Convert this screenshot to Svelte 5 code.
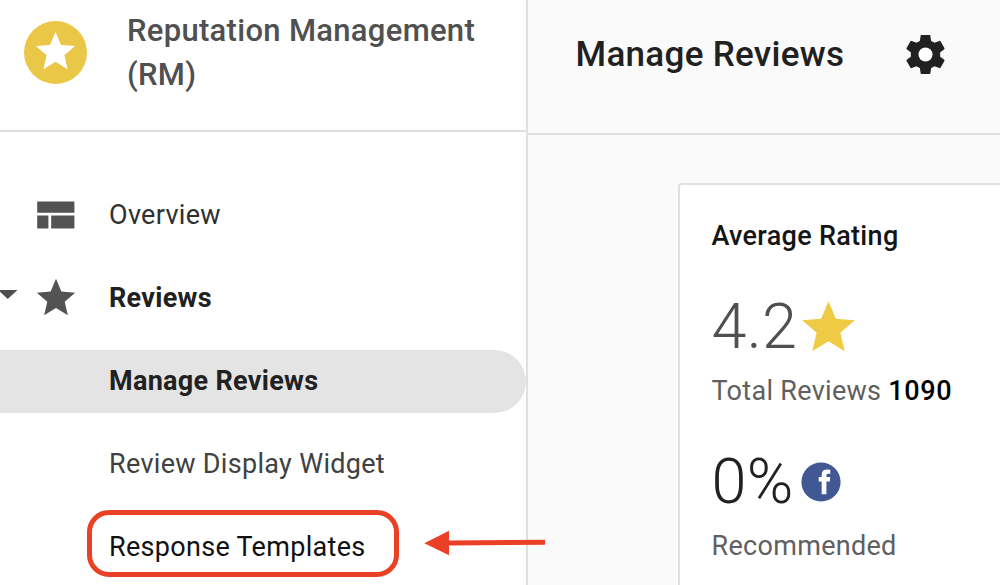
<script>
  const starPath =
    'M12 17.27L18.18 21l-1.64-7.03L22 9.24l-7.19-.61L12 2 9.19 8.63 2 9.24l5.46 4.73L5.82 21z';
  const gearPath =
    'M19.43 12.98c.04-.32.07-.64.07-.98s-.03-.66-.07-.98l2.11-1.65c.19-.15.24-.42.12-.64l-2-3.46c-.12-.22-.39-.3-.61-.22l-2.49 1c-.52-.4-1.08-.73-1.69-.98l-.38-2.65C14.46 2.18 14.25 2 14 2h-4c-.25 0-.46.18-.49.42l-.38 2.65c-.61.25-1.17.59-1.69.98l-2.49-1c-.23-.09-.49 0-.61.22l-2 3.46c-.13.22-.07.49.12.64l2.11 1.65c-.04.32-.07.65-.07.98s.03.66.07.98l-2.11 1.65c-.19.15-.24.42-.12.64l2 3.46c.12.22.39.3.61.22l2.49-1c.52.4 1.08.73 1.69.98l.38 2.65c.03.24.24.42.49.42h4c.25 0 .46-.18.49-.42l.38-2.65c.61-.25 1.17-.59 1.69-.98l2.49 1c.23.09.49 0 .61-.22l2-3.46c.12-.22.07-.49-.12-.64l-2.11-1.65z';

  const items = [
    { label: 'Overview', kind: 'overview', icon: 'dashboard' },
    { label: 'Reviews', kind: 'reviews', icon: 'star' },
    { label: 'Manage Reviews', kind: 'active' },
    { label: 'Review Display Widget', kind: 'widget' },
    { label: 'Response Templates', kind: 'templates' }
  ];
</script>

<div class="app">
  <aside class="sidebar">
    <header class="brand">
      <div class="badge">
        <svg viewBox="0 0 24 24" width="47" height="47"><path d={starPath} fill="#fff" /></svg>
      </div>
      <h1>Reputation Management (RM)</h1>
    </header>
    <nav>
      {#each items as item}
        <a class="item {item.kind}">
          <span class="caret">
            {#if item.icon === 'star'}
              <svg viewBox="0 0 18 9" width="18" height="9"><path d="M-2 0H17.5L7.75 9z" fill="#4f4f4f" /></svg>
            {/if}
          </span>
          <span class="icon">
            {#if item.icon === 'dashboard'}
              <svg viewBox="0 0 38 28" width="38" height="28">
                <path d="M.2 .4h37.2v11.3H.2zM.2 14.4h11.2v13.2H.2zM14.2 14.4h23.2v13.2H14.2z" fill="#535353" />
              </svg>
            {:else if item.icon === 'star'}
              <svg viewBox="0 0 24 24" width="46" height="46"><path d={starPath} fill="#535353" /></svg>
            {/if}
          </span>
          <span class="label">{item.label}</span>
        </a>
      {/each}
    </nav>
  </aside>

  <main>
    <header class="topbar">
      <h2>Manage Reviews</h2>
      <svg viewBox="0 0 24 24" width="47" height="47">
        <path d={gearPath} fill="#212121" />
        <circle cx="12" cy="12" r="3.6" fill="#fff" />
      </svg>
    </header>
    <section class="card">
      <h3>Average Rating</h3>
      <div class="metric rating">
        <span class="value">4.2</span>
        <svg viewBox="0 0 24 24" width="63" height="63"><path d={starPath} fill="#efcb45" /></svg>
      </div>
      <p class="total">Total Reviews <b>1090</b></p>
      <div class="metric percent">
        <span class="value">0%</span>
        <svg viewBox="0 0 40 40" width="40" height="40">
          <circle cx="20" cy="20" r="19.6" fill="#425893" />
          <path
            d="M20.7 32.3V19.4H17.7V15.1H20.7V12.8C20.7 9.2 22.6 7.5 26 7.5L29.3 7.7V11.7H27.3C25.8 11.7 25.4 12.4 25.4 13.6V15.1H29.2L28.8 19.4H25.4V32.3z"
            fill="#fff"
          />
        </svg>
      </div>
      <p class="recommended">Recommended</p>
    </section>
  </main>

  <div class="highlight"></div>
  <svg class="arrow" viewBox="0 0 122 26" width="122" height="26">
    <path d="M0.3 13.3L25 0.8V10.6L121 9.7V14.7L25 15.6V25.3z" fill="#ea4025" />
  </svg>
</div>

<style>
  :global(body) {
    margin: 0;
    background: #fafafa;
  }
  .app {
    position: relative;
    display: flex;
    width: 1000px;
    height: 585px;
    overflow: hidden;
    background: #fafafa;
    font-family: Roboto, sans-serif;
    font-size: 27px;
    letter-spacing: 0.3px;
    color: #212121;
  }
  h1, h2, h3, p {
    margin: 0;
    font-weight: 500;
  }
  svg {
    display: block;
    flex: none;
  }
  .sidebar {
    box-sizing: border-box;
    flex: none;
    width: 528px;
    background: #fff;
    border-right: 2px solid #e0e0e0;
  }
  .brand {
    box-sizing: border-box;
    display: flex;
    height: 132px;
    padding: 8px 0 0 24px;
    border-bottom: 2px solid #e0e0e0;
  }
  .badge {
    display: flex;
    align-items: center;
    justify-content: center;
    flex: none;
    width: 63px;
    height: 63px;
    margin-top: 13px;
    border-radius: 50%;
    background: #ebc748;
  }
  .badge svg {
    margin-top: -3px;
  }
  h1 {
    width: 370px;
    margin: 1px 0 0 40px;
    font-size: 31px;
    line-height: 44px;
    color: #505050;
  }
  nav {
    display: flex;
    flex-direction: column;
    gap: 20px;
    padding-top: 52px;
  }
  .item {
    display: flex;
    align-items: center;
    height: 63px;
    white-space: nowrap;
  }
  .caret {
    width: 32px;
    padding-bottom: 9px;
  }
  .icon {
    display: flex;
    justify-content: center;
    width: 47px;
    padding-bottom: 1px;
  }
  .label {
    margin-left: 30px;
    padding-bottom: 1px;
  }
  .reviews, .active {
    font-weight: 700;
  }
  .active {
    background: #e4e4e4;
    border-radius: 0 32px 32px 0;
  }
  .widget {
    color: #414141;
  }
  .overview {
    color: #303030;
  }
  .templates {
    color: #111;
  }
  main {
    flex: 1;
    min-width: 0;
  }
  .topbar {
    box-sizing: border-box;
    display: flex;
    align-items: center;
    height: 135px;
    padding: 0 0 25px 47.5px;
    border-bottom: 2px solid #e0e0e0;
  }
  h2 {
    width: 326px;
    padding-top: 2px;
    font-size: 35px;
    line-height: 44px;
  }
  .card {
    box-sizing: border-box;
    width: 400px;
    height: 460px;
    margin: 48px 0 0 150px;
    padding: 31px 0 0 31.5px;
    border: 2px solid #e0e0e0;
    border-radius: 4px;
    background: #fff;
    white-space: nowrap;
  }
  h3 {
    font-size: 27px;
    line-height: 40px;
    color: #151515;
  }
  .metric {
    display: flex;
    align-items: center;
    height: 72px;
  }
  .value {
    font-size: 63px;
    font-weight: 300;
    line-height: 72px;
  }
  .rating {
    margin-top: 35px;
    color: #505050;
  }
  .total, .recommended {
    font-weight: 400;
    line-height: 40px;
    color: #606060;
  }
  .total {
    margin-top: 8px;
  }
  .total b {
    font-weight: 500;
    letter-spacing: 0.6px;
    color: #000;
  }
  .percent {
    margin-top: 35px;
  }
  .percent svg {
    margin-left: 7px;
  }
  .recommended {
    margin-top: 8px;
  }
  .highlight {
    position: absolute;
    box-sizing: border-box;
    left: 87px;
    top: 510px;
    width: 312px;
    height: 67px;
    border: 5px solid #ea4025;
    border-radius: 22px;
  }
  .arrow {
    position: absolute;
    left: 424px;
    top: 530px;
  }
</style>
